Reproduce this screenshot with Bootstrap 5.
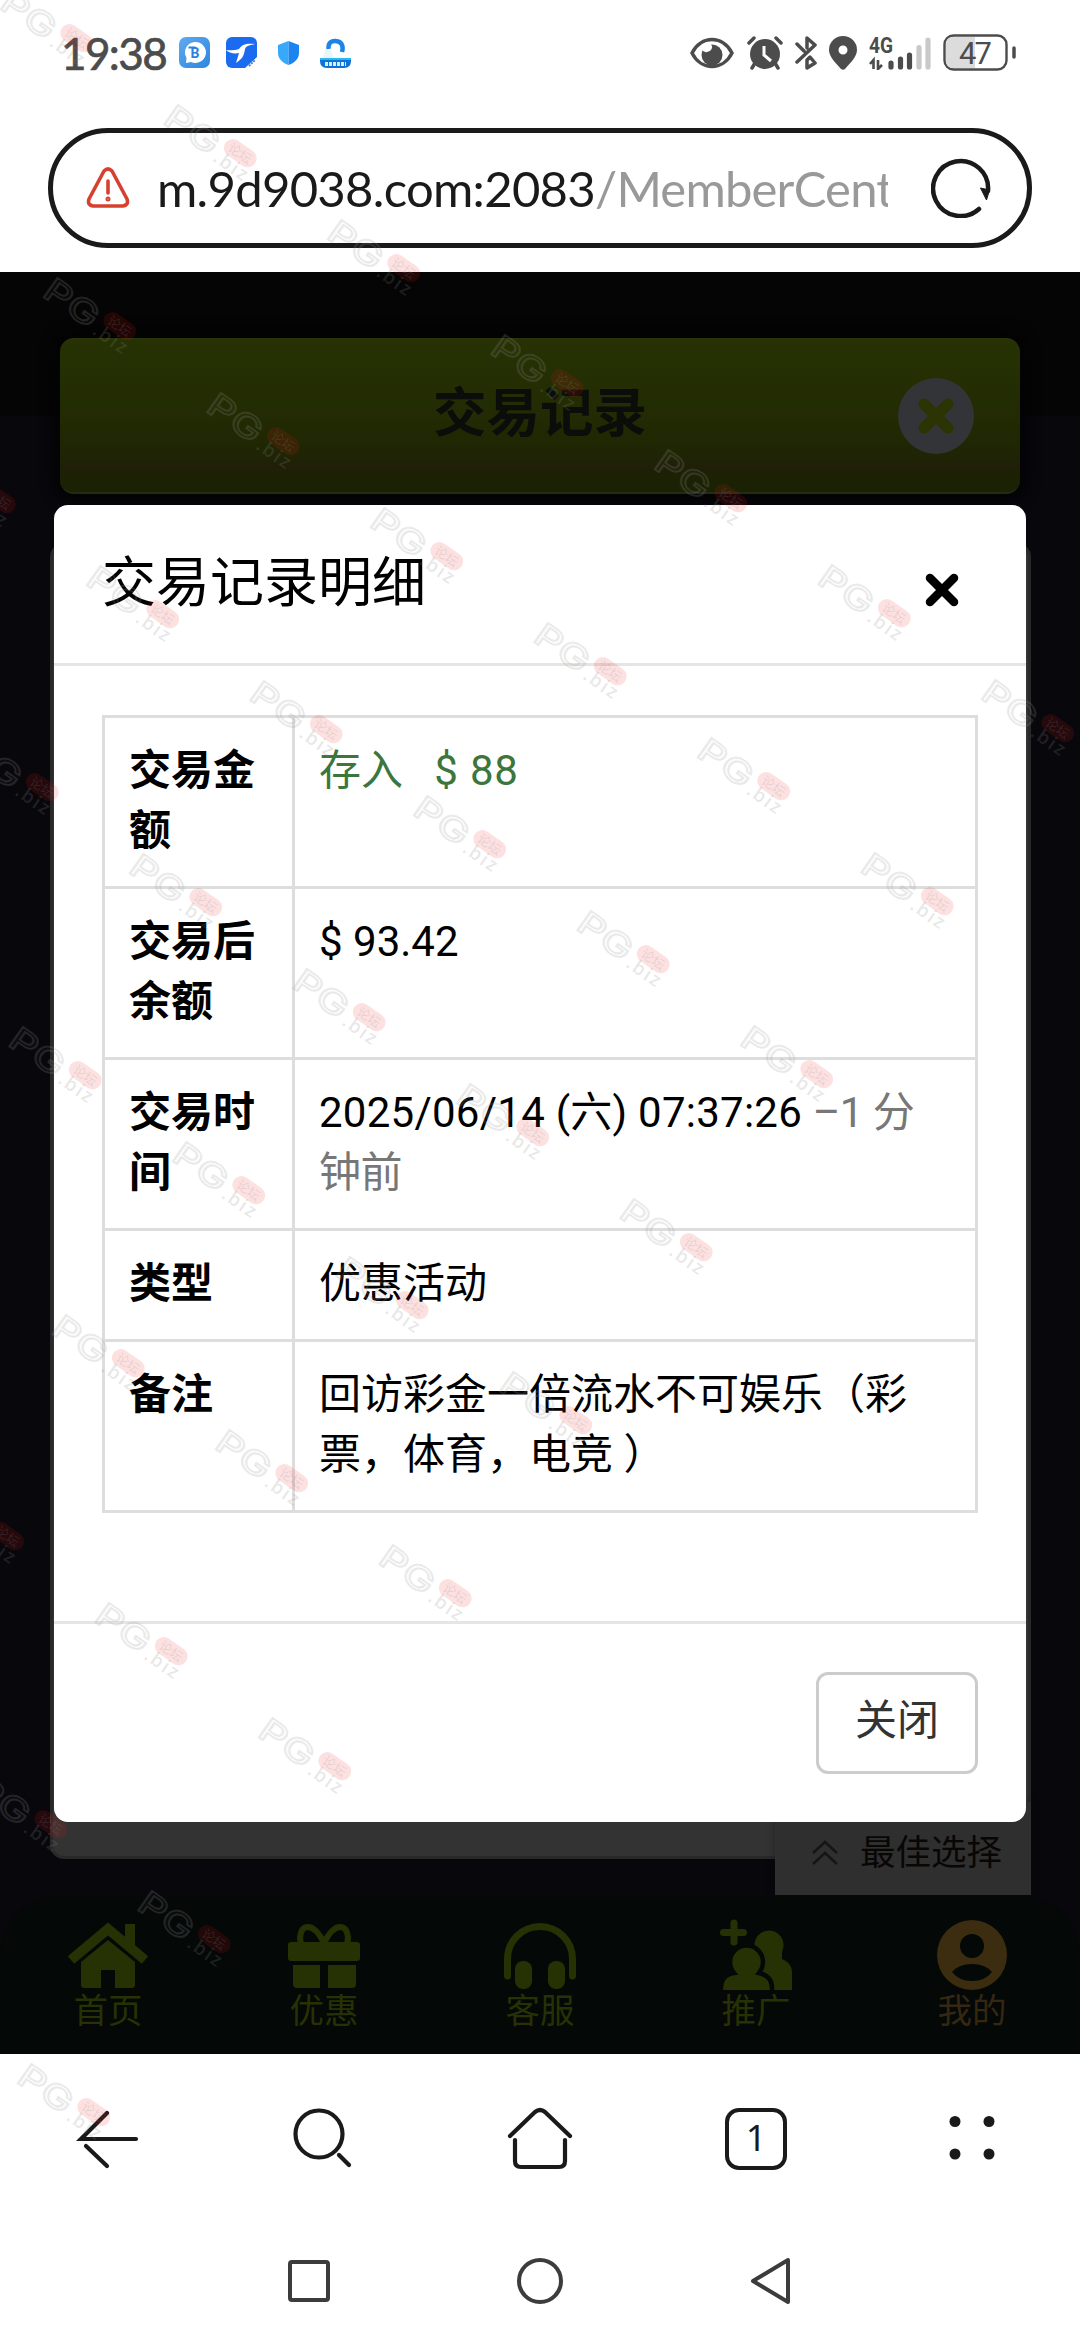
<!DOCTYPE html>
<html lang="zh-CN">
<head>
<meta charset="utf-8">
<meta name="viewport" content="width=device-width, initial-scale=1">
<title>交易记录</title>
<link href="https://cdn.jsdelivr.net/npm/bootstrap@5.3.0/dist/css/bootstrap.min.css" rel="stylesheet">
<style>
body{font-family:Roboto,"Noto Sans CJK SC",sans-serif;color:#000;background:#fff;width:1080px;height:2340px;overflow:hidden}
svg{display:block;flex:none}
.status-bar{height:105px;padding:0 64px 0 61px;color:#4c4c4c}
.clock{font:400 44px/1 Lato,sans-serif;-webkit-text-stroke:.7px #4c4c4c;letter-spacing:-1.6px;width:118px;white-space:nowrap}
.url-wrap{height:167px;padding:23px 48px 24px}
.url-bar{height:120px;border:5px solid #1a1a1a;border-radius:60px;padding:0 36px 0 33px}
.url-text{font:400 49px/70px Lato,sans-serif;color:#1a1a1a;width:731px;margin-left:27px;white-space:nowrap;overflow:hidden;letter-spacing:-.7px}
.url-text span{color:#999;letter-spacing:-.8px}
.site{height:1782px;background:linear-gradient(#050505 0 144px,#08070c 144px);padding-top:66px}
.banner{margin:0 60px;height:156px;border-radius:14px;background:linear-gradient(#263203 0,#222b03 50%,#1f2504 75%,#201f08 84%,#1b2203 92%);border-top:2px solid #2a3409;border-bottom:2px solid #232b10;box-shadow:0 0 14px 6px #030304}
.banner h1{font-size:53.5px;font-weight:700;color:#0b0d0a;line-height:1;padding-bottom:4px}
.banner-x{right:46px;top:38px;width:76px;height:76px;border-radius:50%;background:#333437}
.panel{margin:49px 49px 0 50px;height:1316px;border-radius:14px;background:#333;border:3px solid #292929}
.pick{right:49px;top:1530px;width:256px;height:93px;background:#2f2f2f;color:#090606;font-size:35.5px;line-height:1;padding:24px 29px 0 36px;box-shadow:0 0 8px rgba(0,0,0,.3)}
.tabs{height:159px;bottom:0;border-radius:60px 60px 0 0;background:#040807;border-top:2px solid #080808;color:#263203;padding-top:19px}
.tabs .tab-item{font-size:34.5px;line-height:40px}
.tabs .tab-item span{margin-top:-1px}
.tabs .me{color:#352711}
.dialog{left:54px;top:233px;width:972px;height:1317px;border-radius:14px;border:0;z-index:5;background:#fff}
.dialog .modal-header{height:161px;padding:0 66px 0 48px;border-bottom:3px solid #e5e5e5;border-radius:0}
.dialog .modal-title{font-size:54px;line-height:60px;color:#000;font-weight:400}
.dialog .modal-body{padding:49px 48px 0;flex:1}
.detail{width:876px;table-layout:fixed;border-collapse:collapse;font-size:42px;line-height:60px;color:#000;margin:0}
.detail th,.detail td{border:3px solid #ddd;padding:23px 0 25px 24px;vertical-align:top;white-space:nowrap;background:#fff;color:#000}
.detail th{width:190px}
.detail .in{color:#3c763d}
.detail .num{letter-spacing:.25px}
.detail .in .num{letter-spacing:.8px}
.detail .ago{color:#777;letter-spacing:-.5px}
.dialog .modal-footer{height:201px;padding:0 48px;border-top:3px solid #e5e5e5;align-items:flex-start}
.btn-shut{width:162px;height:102px;margin:48px 0 0;border:3px solid #ccc;border-radius:12px;color:#333;background:#fff;font-size:42px;line-height:60px;padding:16px 0 0}
.tool-row{height:171px;padding-bottom:2px}
.tool-row>div,.tabs>div{width:216px}
.tab-count{width:62px;height:62px;border:4px solid #1a1a1a;border-radius:14px;font:400 36px/52px "Noto Sans",sans-serif;color:#1a1a1a}
.sys-row{height:115px;padding:0 0 3px 288px}
.stamps{left:0;top:0;z-index:10;pointer-events:none}
</style>
<script src="https://cdn.jsdelivr.net/npm/bootstrap@5.3.0/dist/js/bootstrap.bundle.min.js"></script>
</head>
<body class="position-relative d-flex flex-column">

<header class="status-bar d-flex align-items-center">
  <div class="clock">19:38</div>
  <svg width="31" height="31" viewBox="0 0 31 31"><defs><linearGradient id="ga" x1="0" y1="0" x2="1" y2="1"><stop stop-color="#61a9ee"/><stop offset="1" stop-color="#2b86e0"/></linearGradient></defs><rect width="31" height="31" rx="7" fill="url(#ga)"/><path d="M16 5a10.500 10.500 0 1 1-4 20l-5 1 .5-5A10.500 10.500 0 0 1 16 5z" fill="#fff"/><text x="11.500" y="20.500" font-size="14" font-weight="700" font-family="Roboto" fill="#2b7fdd">B</text><path d="M9.500 10.500h7" stroke="#2b7fdd" stroke-width="2"/></svg>
  <svg class="ms-3" width="31" height="31" viewBox="0 0 31 31"><rect width="31" height="31" rx="6" fill="#1a6bf0"/><path d="M0 13q8 1 13-1c3-5 8-6 16-5-5 1-9 2-10 5-1 7-3 10-9 14l3-10C8 17 3 16 0 13z" fill="#fff"/><path d="M31 20v11H19z" fill="#fff"/><path d="M23 29l6-6" stroke="#5a7fc0" stroke-width="2" stroke-dasharray="2 1"/></svg>
  <svg style="margin-left:21px" width="21" height="24" viewBox="0 0 21 24"><path d="M10.500 0 0 4v8c0 6 5 10 10.500 12z" fill="#36a9fb"/><path d="M10.500 0 21 4v8c0 6-5 10-10.500 12z" fill="#1c84f0"/></svg>
  <svg style="margin-left:21px" width="31" height="31" viewBox="0 0 31 31"><path d="M8.500 12C8 5 12 3.500 16 4c5 .5 8 4 6 11" fill="none" stroke="#1c83e8" stroke-width="4.500"/><path d="M6 12l5 1 3 8H2z" fill="#eaf6fe"/><path d="M0 21h31v3q0 7-7 7H7q-7 0-7-7z" fill="#0e73d6"/><path d="M0 21h31v2H0z" fill="#29b9ea"/><path d="M5 27h21" stroke="#d9ecff" stroke-width="4" stroke-dasharray="3 1"/></svg>

  <svg class="ms-auto" width="44" height="32" viewBox="0 0 44 32"><path d="M2 16C11-2 33-2 42 16 33 34 11 34 2 16z" fill="none" stroke="#4c4c4c" stroke-width="3.500"/><circle cx="22" cy="18" r="10.500" fill="#4c4c4c"/><path d="M11 12q3 4 6 3a5 5 0 0 0 4-8l-6-1z" fill="#fff"/></svg>
  <svg style="margin-left:13px" width="36" height="34" viewBox="0 0 36 34" fill="none" stroke="#4c4c4c" stroke-width="3.500" stroke-linecap="round"><circle cx="18" cy="18" r="15" fill="#4c4c4c" stroke="none"/><path d="M2 7l5-5M34 7l-5-5M8 27l-3 5M28 27l3 5"/><path d="M17 10v9l7 6" stroke="#fff" stroke-width="3" stroke-linecap="butt"/></svg>
  <svg style="margin-left:12px" width="22" height="34" viewBox="0 0 22 34" fill="none" stroke="#4c4c4c" stroke-width="3.500" stroke-linejoin="round" stroke-linecap="round"><path d="M2 8l7 7M2 26L20 9l-8-7v10M12 24v8l8-5-5-6z"/></svg>
  <svg style="margin-left:12px" width="28" height="34" viewBox="0 0 28 34"><path fill-rule="evenodd" d="M14 0a14 14 0 0 1 14 14c0 7-7 13-12 19q-2 1.500-4 0C7 27 0 21 0 14A14 14 0 0 1 14 0zm0 9.500a4.500 4.500 0 1 0 0 9 4.500 4.500 0 0 0 0-9z" fill="#4c4c4c"/></svg>
  <svg style="margin-left:12px" width="62" height="34" viewBox="0 0 62 34" fill="none" stroke="#4c4c4c"><text x="0" y="16.500" font-family="Roboto" font-weight="700" font-size="22" stroke="none" fill="#4c4c4c" textLength="24" lengthAdjust="spacingAndGlyphs">4G</text><path d="M4.500 33V24L1 28M9 24v9l4-4" stroke-width="2.600"/><g stroke-width="5.200" stroke-linecap="round"><path d="M22 27v4M31.500 23v8M40.500 19v12"/><path d="M50 11.500V31M59 4v27" stroke="#c9c9c9"/></g></svg>
  <svg style="margin-left:12px" width="73" height="38" viewBox="0 0 73 38"><rect x="1.500" y="1.500" width="62" height="34" rx="9" fill="#fff" stroke="#4c4c4c" stroke-width="2.400"/><path d="M32 3v31H10q-7 0-7-7V10q0-7 7-7z" fill="#dcdcdc"/><text x="32.500" y="29.500" text-anchor="middle" font-size="31" textLength="33" font-family="Roboto" fill="#4c4c4c">47</text><path d="M71 14v9" stroke="#4c4c4c" stroke-width="3.500" stroke-linecap="round"/></svg>
</header>

<div class="url-wrap">
  <div class="url-bar d-flex align-items-center">
    <svg width="44" height="42" viewBox="0 0 44 42" fill="none" stroke="#d6412f" stroke-width="3.600" stroke-linecap="round" stroke-linejoin="round"><path d="M18 4q4-4 8 0l15 28q2 6-4 7H7q-6-1-4-7z"/><path d="M22 14v12"/><circle cx="22" cy="32" r="1" stroke-width="3"/></svg>
    <div class="url-text">m.9d9038.com:2083<span>/MemberCent</span></div>
    <svg class="ms-auto" width="60" height="60" viewBox="0 0 60 60" fill="none"><path d="M57 33A27.500 27.500 0 1 0 48 51" stroke="#1a1a1a" stroke-width="4.500" stroke-linecap="round"/><path d="M49.500 30l9 2-3 10z" fill="#1a1a1a" stroke="#1a1a1a" stroke-width="1"/></svg>
  </div>
</div>

<main class="site position-relative">
  <div class="banner position-relative d-flex align-items-center justify-content-center">
    <h1 class="m-0">交易记录</h1>
    <div class="banner-x position-absolute d-flex align-items-center justify-content-center"><svg width="38" height="38" viewBox="0 0 38 38"><path d="M7 7l24 24M31 7L7 31" stroke="#2b3402" stroke-width="11" stroke-linecap="round"/></svg></div>
  </div>
  <section class="panel"></section>
  <div class="pick position-absolute d-flex justify-content-between">
    <svg width="28" height="26" viewBox="0 0 28 26" fill="none" stroke="#151515" stroke-width="2.500" style="margin-top:14px"><path d="M2 13L14 2l12 11M2 24l12-11 12 11"/></svg>
    <span style="padding-top:10px">最佳选择</span>
  </div>

  <div class="modal-content position-absolute dialog">
    <div class="modal-header d-flex align-items-center justify-content-between">
      <h4 class="modal-title">交易记录明细</h4>
      <svg width="36" height="36" viewBox="0 0 36 36" style="margin-top:12px"><path d="M6 6l24 24M30 6L6 30" stroke="#000" stroke-width="8.500" stroke-linecap="round"/></svg>
    </div>
    <div class="modal-body">
      <table class="detail table-bordered">
        <tr><th>交易金<br>额</th><td class="in">存入 &nbsp; <span class="num">$ 88</span></td></tr>
        <tr><th>交易后<br>余额</th><td>$ 93.42</td></tr>
        <tr><th>交易时<br>间</th><td class="num">2025/06/14 (六) 07:37:26 <span class="ago">–1 分<br>钟前</span></td></tr>
        <tr><th>类型</th><td>优惠活动</td></tr>
        <tr><th>备注</th><td>回访彩金一倍流水不可娱乐（彩<br>票，体育，电竞 ）</td></tr>
      </table>
    </div>
    <div class="modal-footer d-flex justify-content-end"><button type="button" class="btn btn-shut d-flex justify-content-center">关闭</button></div>
  </div>

  <nav class="tabs position-absolute start-0 w-100 d-flex text-center">
    <div class="tab-item d-flex flex-column align-items-center"><svg width="84" height="76" viewBox="0 0 84 76" fill="#263203"><path d="M59 8h10v25L59 25z"/><path d="M5 44L42 13l37 31" fill="none" stroke="#263203" stroke-width="10"/><path d="M42 24l27 22v23q0 3-3 3H49V54H35v18H18q-3 0-3-3V46z"/></svg><span>首页</span></div>
    <div class="tab-item d-flex flex-column align-items-center"><svg width="72" height="76" viewBox="0 0 72 76" fill="#263203"><path d="M36 27Q28 11 20 11c-8 0-9 11-7 17M36 27q8-16 16-16c8 0 9 11 7 17" fill="none" stroke="#263203" stroke-width="6"/><rect y="26" width="72" height="19" rx="3"/><path d="M5 49h27v23H9q-4 0-4-4zM40 49h28v19q0 4-4 4H40z"/></svg><span>优惠</span></div>
    <div class="tab-item d-flex flex-column align-items-center"><svg width="72" height="76" viewBox="0 0 72 76" fill="#263203"><path d="M3.500 60V43a32.500 32.500 0 0 1 65 0v17" fill="none" stroke="#263203" stroke-width="7" stroke-linecap="round"/><rect x="11" y="45" width="17" height="28" rx="8"/><rect x="44" y="45" width="17" height="28" rx="8"/></svg><span>客服</span></div>
    <div class="tab-item d-flex flex-column align-items-center"><svg width="72" height="76" viewBox="0 0 72 76" fill="#263203"><path d="M14 7v19M3.500 16.500h20" stroke="#263203" stroke-width="7" stroke-linecap="round"/><circle cx="49" cy="29" r="14.500"/><path d="M42 36h20v7q10 4 10 13v18H42z"/><path stroke="#040807" stroke-width="4.500" d="M1 78V72q0-13 13-15-4-5-4-11a16.500 16.500 0 0 1 33 0q0 6-4 11 13 3 13 15v6z"/><path d="M0 74h72v4H0z" fill="#040807"/></svg><span>推广</span></div>
    <div class="tab-item me d-flex flex-column align-items-center"><svg width="72" height="76" viewBox="0 0 72 76"><circle cx="36" cy="39" r="35" fill="#3c2c10"/><circle cx="36" cy="30" r="12" fill="#040807"/><path d="M16 56q7-8 20-8t20 8q-7 9-20 9t-20-9z" fill="#040807"/></svg><span>我的</span></div>
  </nav>
</main>

<footer>
  <div class="tool-row d-flex align-items-center">
    <div class="d-flex justify-content-center"><svg width="64" height="60" viewBox="0 0 64 60" fill="none" stroke="#1a1a1a" stroke-width="4.200" stroke-linecap="round"><path d="M31 4L5 30h55"/><path d="M10 37l21 20"/></svg></div>
    <div class="d-flex justify-content-center"><svg width="64" height="64" viewBox="0 0 64 64" fill="none" stroke="#1a1a1a" stroke-width="4.200" stroke-linecap="round"><circle cx="27" cy="27" r="23.500"/><path d="M47 48l10 10"/></svg></div>
    <div class="d-flex justify-content-center"><svg width="66" height="64" viewBox="0 0 66 64" fill="none" stroke="#1a1a1a" stroke-width="4.200" stroke-linecap="round" stroke-linejoin="round"><path d="M3 29L28 5q5-4 10 0l25 24"/><path d="M8 33v21q0 6 6 6h38q6 0 6-6V33"/></svg></div>
    <div class="d-flex justify-content-center"><div class="tab-count text-center">1</div></div>
    <div class="d-flex justify-content-center"><svg width="64" height="64" viewBox="0 0 64 64" fill="#1a1a1a"><circle cx="15" cy="14.500" r="5.500"/><circle cx="49" cy="14.500" r="5.500"/><circle cx="15" cy="47" r="5.500"/><circle cx="49" cy="47" r="5.500"/></svg></div>
  </div>
  <div class="sys-row d-flex align-items-center" style="gap:187px">
    <svg width="42" height="48" viewBox="0 0 42 48" fill="none" stroke="#3c3c3c" stroke-width="4"><rect x="2" y="5" width="38" height="38" rx="2"/></svg>
    <svg width="46" height="48" viewBox="0 0 46 48" fill="none" stroke="#3c3c3c" stroke-width="4"><circle cx="23" cy="24" r="21"/></svg>
    <svg width="42" height="48" viewBox="0 0 42 48" fill="none" stroke="#3c3c3c" stroke-width="4" stroke-linejoin="round"><path d="M3 24L38 3v42z"/></svg>
  </div>
</footer>

<svg class="stamps position-absolute" width="1080" height="2340" aria-hidden="true"></svg>
<script>
// Diagonal lattice of forum stamps laid over the whole screen
const layer = document.querySelector('.stamps');
let out = '';
for (let i = 0; i <= 6; i++) for (let j = 0; j <= 9; j++) {
  const x = 13.5 + 163.5 * i - 120.5 * j, y = -11 + 115 * i + 173 * j;
  if (x < -90) continue;
  out += `<g transform="translate(${x} ${y}) rotate(35)" fill="none">
    <text x="-2" y="24" font-size="33" font-family="Inter" font-weight="500" textLength="59" lengthAdjust="spacingAndGlyphs" fill="#999" fill-opacity=".05" stroke="#999" stroke-opacity=".2" stroke-width="1.800">PG</text>
    <path d="M70 -3L90 -5" stroke="none"/><rect x="62" y="-5" width="36" height="18" rx="9" fill="#f01818" fill-opacity=".13"/>
    <text x="67" y="9" font-size="13" font-family="Noto Sans CJK SC" fill="#888" fill-opacity=".2">论坛</text>
    <text x="61" y="26" font-size="19" font-family="Open Sans" font-weight="600" fill="#888" fill-opacity=".2" textLength="37">.biz</text></g>`;
}
layer.innerHTML = out;
</script>
</body>
</html>
